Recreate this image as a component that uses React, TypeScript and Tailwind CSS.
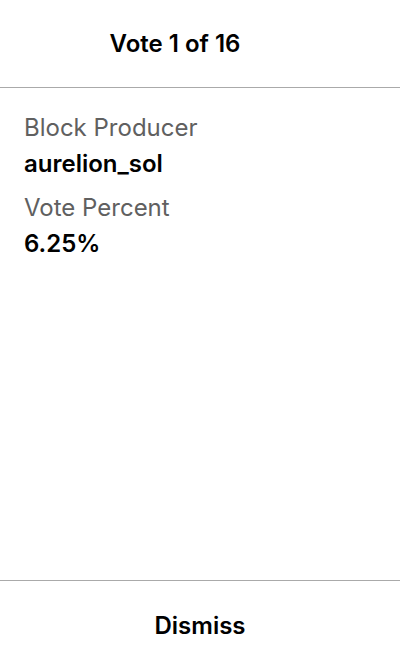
export default function App() {
  return (
    <main className="flex min-h-screen flex-col bg-white font-['Inter','Liberation_Sans',sans-serif] text-2xl text-black">
      <header className="flex h-[88px] items-center border-b border-[#aaaaaa] px-6">
        <h1 className="flex-1 pr-[50px] text-center font-semibold">Vote 1 of 16</h1>
      </header>
      <dl className="flex-1 px-6 pt-[22px] leading-9">
        <dt className="text-[#606060]">Block Producer</dt>
        <dd className="mb-2 font-semibold">aurelion_sol</dd>
        <dt className="text-[#606060]">Vote Percent</dt>
        <dd className="font-semibold">6.25%</dd>
      </dl>
      <footer className="border-t border-[#aaaaaa]">
        <button type="button" className="h-[91px] w-full pb-0.5 font-semibold">Dismiss</button>
      </footer>
    </main>
  );
}
